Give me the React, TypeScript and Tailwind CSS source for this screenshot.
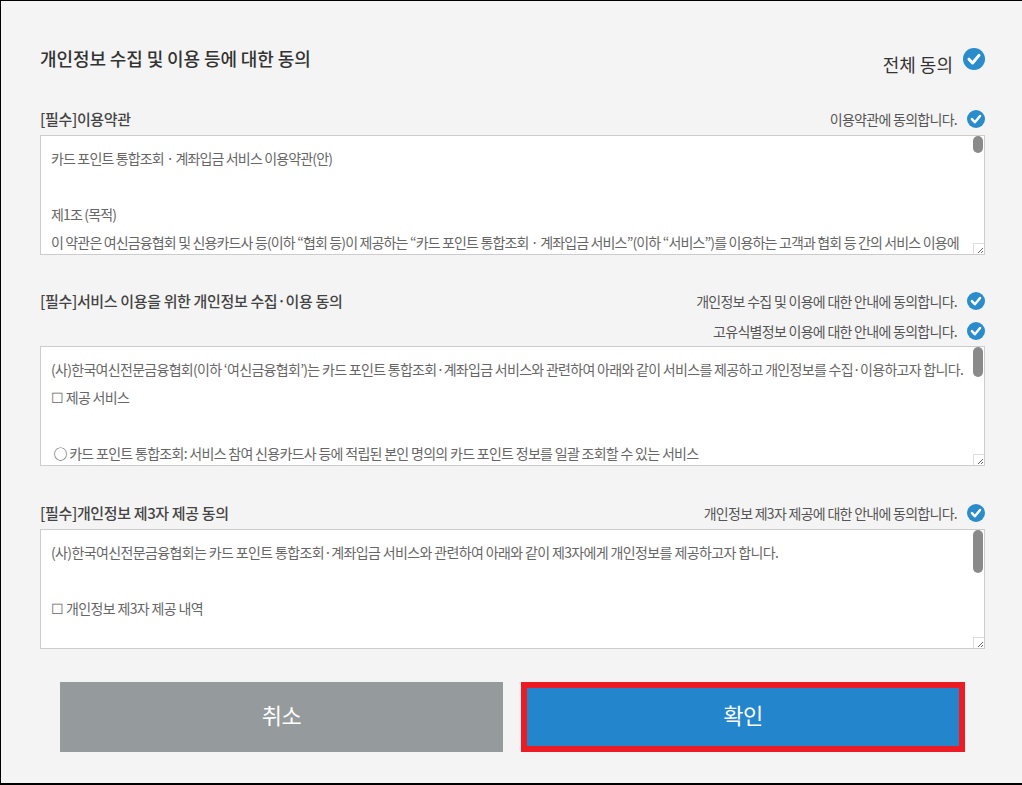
import { ReactNode } from "react";

const FONT = "[font-family:'Noto_Sans_CJK_KR','Noto_Sans',sans-serif]";

function Check({ size }: { size: number }) {
    return (
        <svg width={size} height={size} viewBox="0 0 22 22" className="shrink-0">
            <circle cx="11" cy="11" r="11" fill="#2a8ccb" />
            <path d="M6 11.2 L9.6 15 L16 7.4" fill="none" stroke="#fff" strokeWidth="3" strokeLinecap="round" strokeLinejoin="round" />
        </svg>
    );
}

function AgreeLine({ text }: { text: string }) {
    return (
        <div className="flex items-center justify-end h-[30px]">
            <span className="text-[14px] tracking-[-0.72px] text-[#555]">{text}</span>
            <span className="ml-[10px]"><Check size={18} /></span>
        </div>
    );
}

function TermsBox({ thumb, tracking, children }: { thumb: string; tracking: string; children: ReactNode }) {
    return (
        <div className="relative h-[120px] w-[945px] overflow-hidden border border-[#ccc] bg-white pl-[10px] pt-[8px]">
            <div className={`text-[14px] leading-[28px] text-[#666] whitespace-nowrap ${tracking}`}>{children}</div>
            <div className={`absolute right-[1px] top-0 w-[10px] rounded-[5px] bg-[#8a8a8a] ${thumb}`} />
            <div className="absolute bottom-0 right-0 flex h-[11px] w-[11px] items-end justify-end border-l border-t border-[#ddd] bg-white">
                <svg width="8" height="8" viewBox="0 0 8 8">
                    <path d="M7 2 L2 7 M7 5 L5 7" stroke="#666" strokeWidth="1" />
                </svg>
            </div>
        </div>
    );
}

export default function App() {
    return (
        <div className={`${FONT} h-[785px] w-[1022px] overflow-hidden border-l border-t border-b-2 border-black bg-[#f4f4f4]`}>
            <div className="ml-[39px] w-[945px]">
                <div className="flex h-[83px] justify-between">
                    <h1 className="mt-[42px] text-[18px] font-medium leading-[30px] tracking-[-0.1px] text-[#333]">개인정보 수집 및 이용 등에 대한 동의</h1>
                    <div className="mt-[47px] flex h-[30px] items-start">
                        <span className="mt-[3px] text-[18px] leading-[26px] tracking-[0px] text-[#333]">전체 동의</span>
                        <span className="ml-[10px]"><Check size={22} /></span>
                    </div>
                </div>

                <div className="flex h-[51px] items-end justify-between pb-[1px]">
                    <h2 className="text-[15px] font-medium leading-[30px] tracking-[-0.35px] text-[#444]">[필수]이용약관</h2>
                    <AgreeLine text="이용약관에 동의합니다." />
                </div>
                <TermsBox thumb="h-[17px]" tracking="tracking-[-0.85px]">
                    <p>카드 포인트 통합조회 · 계좌입금 서비스 이용약관(안)</p>
                    <p>&nbsp;</p>
                    <p>제1조 (목적)</p>
                    <p>이 약관은 여신금융협회 및 신용카드사 등(이하 “협회 등)이 제공하는 “카드 포인트 통합조회 · 계좌입금 서비스”(이하 “서비스”)를 이용하는 고객과 협회 등 간의 서비스 이용에</p>
                </TermsBox>

                <div className="mt-[31px] flex h-[60px] justify-between">
                    <h2 className="text-[15px] font-medium leading-[30px] tracking-[-0.35px] text-[#444]">[필수]서비스 이용을 위한 개인정보 수집·이용 동의</h2>
                    <div>
                        <AgreeLine text="개인정보 수집 및 이용에 대한 안내에 동의합니다." />
                        <AgreeLine text="고유식별정보 이용에 대한 안내에 동의합니다." />
                    </div>
                </div>
                <TermsBox thumb="h-[30px]" tracking="tracking-[-0.7px]">
                    <p>(사)한국여신전문금융협회(이하 ‘여신금융협회’)는 카드 포인트 통합조회·계좌입금 서비스와 관련하여 아래와 같이 서비스를 제공하고 개인정보를 수집·이용하고자 합니다.</p>
                    <p>☐ 제공 서비스</p>
                    <p>&nbsp;</p>
                    <p>&nbsp;<span className="font-bold">○</span> 카드 포인트 통합조회: 서비스 참여 신용카드사 등에 적립된 본인 명의의 카드 포인트 정보를 일괄 조회할 수 있는 서비스</p>
                </TermsBox>

                <div className="mt-[32px] flex h-[31px] justify-between">
                    <h2 className="text-[15px] font-medium leading-[30px] tracking-[-0.35px] text-[#444]">[필수]개인정보 제3자 제공 동의</h2>
                    <AgreeLine text="개인정보 제3자 제공에 대한 안내에 동의합니다." />
                </div>
                <TermsBox thumb="h-[43px]" tracking="tracking-[-0.63px]">
                    <p>(사)한국여신전문금융협회는 카드 포인트 통합조회·계좌입금 서비스와 관련하여 아래와 같이 제3자에게 개인정보를 제공하고자 합니다.</p>
                    <p>&nbsp;</p>
                    <p>☐ 개인정보 제3자 제공 내역</p>
                </TermsBox>

                <div className="mt-[33px] flex gap-[18px] pl-[20px]">
                    <button className="h-[70px] w-[443px] bg-[#959a9d] pb-[5px] text-[22px] tracking-[-0.5px] text-white">취소</button>
                    <button className="h-[70px] w-[444px] border-[6px] border-[#ed1c24] bg-[#2386cc] pb-[5px] text-[22px] tracking-[-0.5px] text-white">확인</button>
                </div>
            </div>
        </div>
    );
}
